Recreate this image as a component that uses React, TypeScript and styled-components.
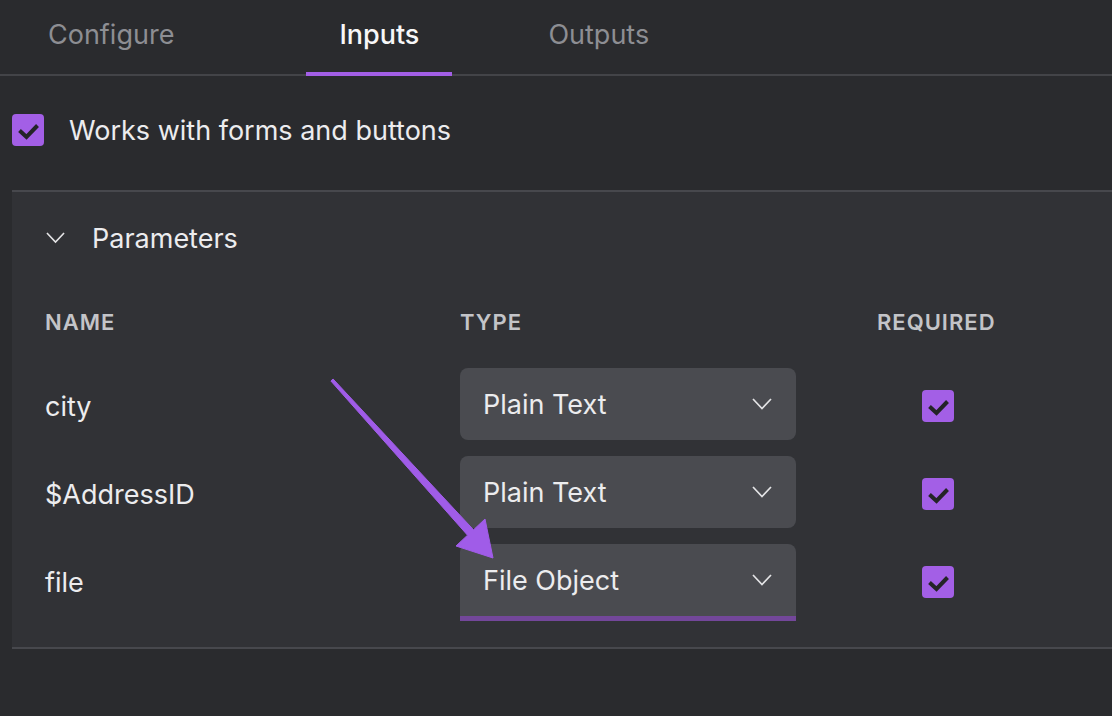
import React from "react";
import styled, { createGlobalStyle } from "styled-components";

const GlobalStyle = createGlobalStyle`
   html, body {
      margin: 0;
      padding: 0;
      background: #2a2b2e;
   }
   body {
      font-family: Inter, "Noto Sans", "Liberation Sans", sans-serif;
      color: #ececee;
      -webkit-font-smoothing: antialiased;
   }
`;

interface ParamRow {
   name: string;
   type: string;
   required: boolean;
   focused?: boolean;
}

const rows: ParamRow[] = [
   { name: "city", type: "Plain Text", required: true },
   { name: "$AddressID", type: "Plain Text", required: true },
   { name: "file", type: "File Object", required: true, focused: true },
];

const tabs = [
   { label: "Configure", offset: 15 },
   { label: "Inputs", offset: 99, active: true },
   { label: "Outputs", offset: 63 },
];

function CheckBox() {
   return (
      <Box>
         <svg width="32" height="32" viewBox="0 0 32 32">
            <path
               d="M7.5 16.5 L14.5 23 L25.5 11.5"
               fill="none"
               stroke="#242427"
               strokeWidth="4"
            />
         </svg>
      </Box>
   );
}

function Chevron({ size }: { size: number }) {
   return (
      <svg width={size} height={size * 0.6} viewBox="0 0 20 12">
         <path d="M1 1 L10 10.5 L19 1" fill="none" stroke="#e4e4e6" strokeWidth="1.7" />
      </svg>
   );
}

function Pointer() {
   // the purple call-out arrow laid over the form
   return (
      <Overlay width="1112" height="716" viewBox="0 0 1112 716">
         <polygon
            points="333.1,379 473.5,529.8 485,519 493,558 456,546 467.5,535.2 330.9,381"
            fill="#a05ce8"
            stroke="#a05ce8"
            strokeWidth="1"
            strokeLinejoin="round"
         />
      </Overlay>
   );
}

export default function App() {
   return (
      <Page>
         <GlobalStyle />
         <TabBar>
            {tabs.map((t) => (
               <Tab key={t.label} $active={!!t.active} $offset={t.offset}>
                  {t.label}
               </Tab>
            ))}
         </TabBar>

         <OptionRow>
            <CheckBox />
            <OptionLabel>Works with forms and buttons</OptionLabel>
         </OptionRow>

         <Panel>
            <PanelHeader>
               <Chevron size={19} />
               <PanelTitle>Parameters</PanelTitle>
            </PanelHeader>

            <Table>
               <HeadCell>NAME</HeadCell>
               <HeadCell>TYPE</HeadCell>
               <HeadCell>REQUIRED</HeadCell>

               {rows.map((r) => (
                  <React.Fragment key={r.name}>
                     <NameCell>{r.name}</NameCell>
                     <Select $focused={!!r.focused}>
                        <span>{r.type}</span>
                        <Chevron size={20} />
                     </Select>
                     <RequiredCell>{r.required && <CheckBox />}</RequiredCell>
                  </React.Fragment>
               ))}
            </Table>
         </Panel>

         <Pointer />
      </Page>
   );
}

const Page = styled.div`
   position: relative;
   width: 1112px;
   height: 716px;
   overflow: hidden;
   background: #2a2b2e;
`;

const TabBar = styled.div`
   display: flex;
   height: 74px;
   border-bottom: 2px solid #434448;
`;

const Tab = styled.div<{ $active: boolean; $offset: number }>`
   display: flex;
   align-items: center;
   justify-content: center;
   margin-left: ${(p) => p.$offset}px;
   padding: 0 33px 4px;
   box-sizing: border-box;
   margin-bottom: -2px;
   height: 76px;
   border-bottom: 4px solid ${(p) => (p.$active ? "#a35fe6" : "transparent")};
   font-size: 27px;
   font-weight: ${(p) => (p.$active ? 500 : 400)};
   color: ${(p) => (p.$active ? "#f7f7f8" : "#8d8e93")};
`;

const OptionRow = styled.div`
   display: flex;
   align-items: center;
   gap: 25px;
   padding: 38px 12px 0;
   height: 32px;
   margin-bottom: 44px;
`;

const OptionLabel = styled.span`
   font-size: 27px;
   color: #ececee;
`;

const Box = styled.div`
   width: 32px;
   height: 32px;
   border-radius: 4px;
   background: #a35fe6;
   flex-shrink: 0;
   svg {
      display: block;
   }
`;

const Panel = styled.section`
   margin-left: 12px;
   background: #313236;
   border-top: 2px solid #47484d;
   border-bottom: 2px solid #47484d;
   padding-bottom: 23px;
`;

const PanelHeader = styled.div`
   display: flex;
   align-items: center;
   gap: 27px;
   height: 92px;
   padding-left: 34px;
`;

const PanelTitle = styled.span`
   font-size: 27px;
   color: #ececee;
`;

const Table = styled.div`
   display: grid;
   grid-template-columns: 415px 417px 122px;
   grid-template-rows: 76px;
   grid-auto-rows: 88px;
   padding-left: 33px;
`;

const HeadCell = styled.div`
   display: flex;
   align-items: center;
   height: 76px;
   font-size: 22px;
   font-weight: 600;
   letter-spacing: 1px;
   color: #c3c4c8;
   white-space: nowrap;
`;

const NameCell = styled.div`
   display: flex;
   align-items: center;
   height: 72px;
   margin-top: 10px;
   font-size: 27px;
   color: #ececee;
`;

const Select = styled.div<{ $focused: boolean }>`
   display: flex;
   align-items: center;
   justify-content: space-between;
   width: 336px;
   margin-top: 8px;
   padding: 0 24px 0 23px;
   box-sizing: border-box;
   background: #4a4b50;
   border-radius: ${(p) => (p.$focused ? "8px 8px 0 0" : "8px")};
   border-bottom: ${(p) => (p.$focused ? "5px solid #73479a" : "none")};
   height: ${(p) => (p.$focused ? "77px" : "72px")};
   font-size: 27px;
   color: #ececee;
   svg {
      display: block;
   }
`;

const RequiredCell = styled.div`
   display: flex;
   align-items: center;
   justify-content: center;
   height: 72px;
   margin-top: 10px;
`;

const Overlay = styled.svg`
   position: absolute;
   left: 0;
   top: 0;
   pointer-events: none;
`;
